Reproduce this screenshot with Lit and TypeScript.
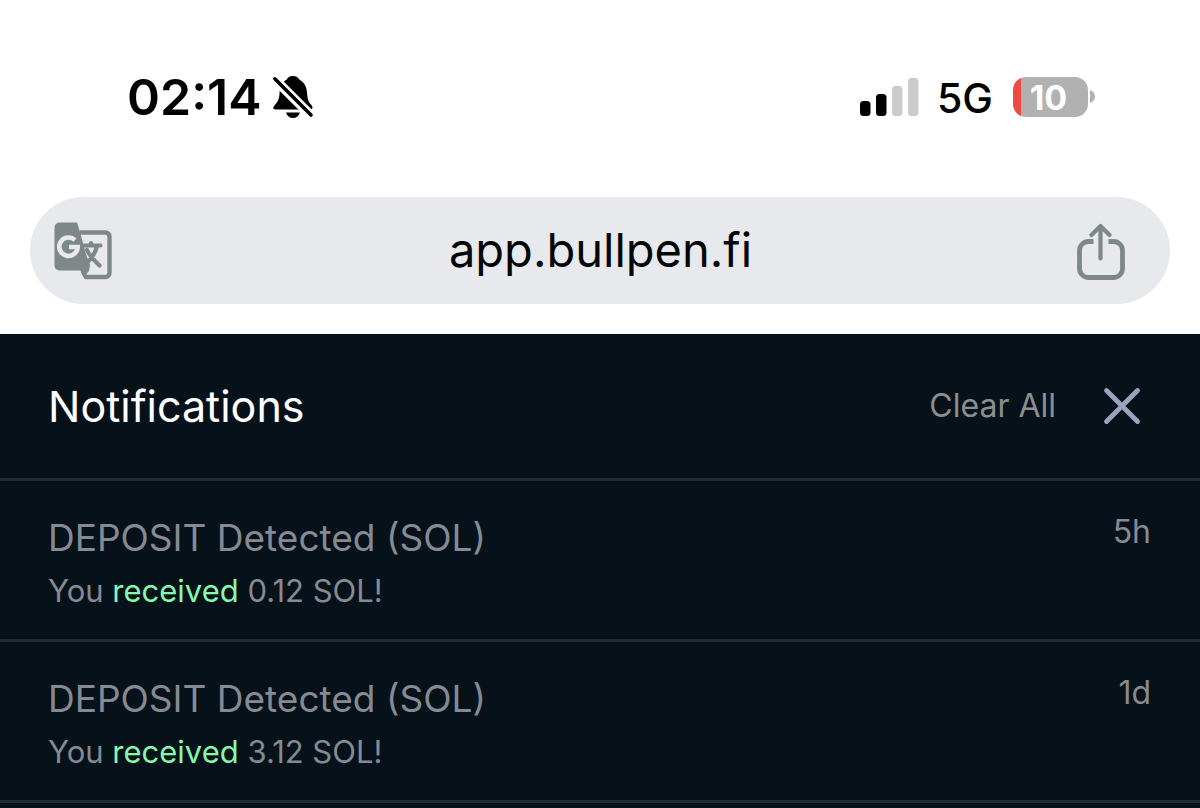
import { LitElement, html, css, svg } from "lit";
import { customElement, property, state } from "lit/decorators.js";

interface Notice {
  id: number;
  title: string;
  amount: string;
  age: string;
}

@customElement("status-bar")
class StatusBar extends LitElement {
  @property() time = "";
  @property() network = "";
  @property({ type: Number }) battery = 0;

  static styles = css`
    :host {
      display: flex;
      align-items: center;
      justify-content: space-between;
      height: 194px;
      padding: 0 104px 7px 127px;
      box-sizing: border-box;
      color: #000;
      font-family: Inter, sans-serif;
      line-height: 60px;
    }
    .group {
      display: flex;
      align-items: center;
    }
    .time {
      font-size: 50px;
      font-weight: 600;
    }
    .bell {
      margin-left: 10px;
    }
    .network {
      margin: 2px 20px 0 18px;
      font-size: 41px;
      font-weight: 500;
    }
    .battery {
      display: flex;
      align-items: center;
      gap: 2px;
    }
    .cell {
      width: 75px;
      height: 40px;
      padding-right: 4px;
      box-sizing: border-box;
      border-radius: 13px;
      background: linear-gradient(to right, #f04a45 8px, #b1b1b1 8px);
      color: #fff;
      font-size: 34px;
      font-weight: 700;
      line-height: 41px;
      text-align: center;
    }
    svg {
      display: block;
    }
  `;

  render() {
    const bars = [15, 22, 30, 38];
    return html`
      <div class="group">
        <span class="time">${this.time}</span>
        <svg class="bell" width="42" height="44" viewBox="0 0 42 44" role="img" aria-label="Silent">
          <path
            d="M21 1C17.800 1 15.600 2.500 14.500 4.800C9.500 7.500 7.800 12 7.500 19C7.200 24.500 5.500 27 3 29.800C.4 32.600 1 34.500 3.500 34.500H37.500C40.500 34.500 41.600 32.600 39.200 29.800C36.500 27 35.500 24.500 35.200 19C34.800 12 32.500 7.500 27.500 4.800C26.400 2.500 24.200 1 21 1Z"
          />
          <path d="M14 37.500H28C27 41 24.500 43 21 43S15 41 14 37.500Z" />
          <path d="M1 2.500L39 40.500" stroke="#fff" stroke-width="9.400" />
          <path d="M2.800 3.800L39 40" stroke="#000" stroke-width="3.600" stroke-linecap="round" />
        </svg>
      </div>
      <div class="group">
        <svg width="59" height="38" viewBox="0 0 59 38" role="img" aria-label="Signal">
          ${bars.map(
            (h, i) => svg`<rect x=${i * 16} y=${38 - h} width="10.500" height=${h} rx="3.500"
              fill=${i < 2 ? "#000" : "#cbcbcb"} />`
          )}
        </svg>
        <span class="network">${this.network}</span>
        <div class="battery">
          <div class="cell">${this.battery}</div>
          <svg width="6" height="13" viewBox="0 0 6 13" aria-hidden="true">
            <path d="M0 0Q5 2 5 6.500Q5 11 0 13Z" fill="#b1b1b1" />
          </svg>
        </div>
      </div>
    `;
  }
}

@customElement("address-bar")
class AddressBar extends LitElement {
  @property() address = "";

  static styles = css`
    :host {
      display: flex;
      align-items: center;
      height: 107px;
      margin: 0 30px;
      padding: 0 45px 0 24px;
      box-sizing: border-box;
      border-radius: 54px;
      background: #e8e9ed;
    }
    button {
      flex: none;
      padding: 0;
      border: 0;
      background: none;
      cursor: pointer;
    }
    svg {
      display: block;
    }
    .address {
      flex: 1;
      min-width: 0;
      height: 72px;
      padding: 0 0 3px 12px;
      box-sizing: border-box;
      border: 0;
      background: none;
      color: #050608;
      font: 400 47px/60px Inter, sans-serif;
      text-align: center;
      outline: none;
    }
  `;

  render() {
    return html`
      <button aria-label="Translate">
        <svg width="58" height="58" viewBox="0 0 58 58">
          <path
            d="M26 10.500H51.500A4 4 0 0 1 55.500 14.500V51A4 4 0 0 1 51.500 55H31.500"
            fill="none"
            stroke="#7f8889"
            stroke-width="4.400"
          />
          <path
            d="M5.500 .5H23L26 10L32 32L36 43L35 49L32.500 52V57H30.500L28 53L26.500 48.500H5.500A5 5 0 0 1 .5 43.500V5.500A5 5 0 0 1 5.500 .5Z"
            fill="#7f8889"
          />
          <path d="M32 25.500H39.500L36.500 31.500Z" fill="#e8e9ed" />
          <path
            d="M21 18.200A9.200 9.200 0 1 0 23.700 25H15"
            fill="none"
            stroke="#e8e9ed"
            stroke-width="4.600"
          />
          <g fill="none" stroke="#7f8889" stroke-width="4.200" stroke-linecap="round" stroke-linejoin="round">
            <path d="M30 23.500H46.500M37 21V23M43 24C41.500 31 38 36 33 41M33 28C36 35 41 39 45.500 43.500" />
          </g>
        </svg>
      </button>
      <input class="address" type="text" aria-label="Address" .value=${this.address} />
      <button aria-label="Share">
        <svg
          width="48"
          height="58"
          viewBox="0 0 48 58"
          fill="none"
          stroke="#7f8889"
          stroke-linecap="round"
          stroke-linejoin="round"
        >
          <path
            d="M16.500 19.500H11.500A9 9 0 0 0 2.500 28.500V46.500A9 9 0 0 0 11.500 55.500H36.500A9 9 0 0 0 45.500 46.500V28.500A9 9 0 0 0 36.500 19.500H31.500"
            stroke-width="4.800"
            stroke-linecap="butt"
          />
          <path d="M23.500 36.500V4.500M14.500 13L23.500 4L32.500 13" stroke-width="4.200" />
        </svg>
      </button>
    `;
  }
}

@customElement("notification-item")
class NotificationItem extends LitElement {
  @property({ attribute: false }) notice!: Notice;

  static styles = css`
    :host {
      display: flex;
      justify-content: space-between;
      padding: 31px 49px 21px 48px;
      border-bottom: 3px solid #1d2e3b;
      color: #858a93;
      font-family: Inter, sans-serif;
      font-size: 31px;
    }
    .title {
      margin: 0;
      font-size: 37px;
      font-weight: 400;
      line-height: 52px;
    }
    .detail {
      margin: 0;
      line-height: 54px;
    }
    .received {
      color: #86f8ac;
    }
    .age {
      font-size: 32px;
      line-height: 40px;
    }
  `;

  render() {
    const { title, amount, age } = this.notice;
    return html`
      <div>
        <h2 class="title">${title}</h2>
        <p class="detail">You <span class="received">received</span> ${amount}!</p>
      </div>
      <time class="age">${age}</time>
    `;
  }
}

@customElement("app-root")
class AppRoot extends LitElement {
  @state() private notices: Notice[] = [
    { id: 1, title: "DEPOSIT Detected (SOL)", amount: "0.12 SOL", age: "5h" },
    { id: 2, title: "DEPOSIT Detected (SOL)", amount: "3.12 SOL", age: "1d" },
  ];

  static styles = css`
    :host {
      display: flex;
      flex-direction: column;
      height: 100vh;
      overflow: hidden;
      background: #fff;
    }
    .chrome {
      flex: none;
      padding: 3px 0 30px;
    }
    .panel {
      flex: 1;
      background: #07111a;
      font-family: Inter, sans-serif;
    }
    .header {
      display: flex;
      align-items: center;
      height: 144px;
      padding: 0 59px 0 48px;
      border-bottom: 3px solid #1d2e3b;
    }
    .heading {
      flex: 1;
      margin: 0;
      color: #fff;
      font-size: 43px;
      font-weight: 400;
      line-height: 56px;
    }
    button {
      padding: 0;
      border: 0;
      background: none;
      cursor: pointer;
    }
    .clear {
      margin-right: 47px;
      color: #8c8f8f;
      font: 400 32px/42px Inter, sans-serif;
    }
    svg {
      display: block;
    }
  `;

  private clearAll() {
    this.notices = [];
  }

  render() {
    return html`
      <header class="chrome">
        <status-bar time="02:14" network="5G" battery="10"></status-bar>
        <address-bar address="app.bullpen.fi"></address-bar>
      </header>
      <main class="panel">
        <div class="header">
          <h1 class="heading">Notifications</h1>
          <button class="clear" @click=${this.clearAll}>Clear All</button>
          <button aria-label="Close">
            <svg width="38" height="38" viewBox="0 0 38 38">
              <path d="M3.500 3.500L34.500 34.500M34.500 3.500L3.500 34.500" stroke="#9da3bc" stroke-width="4.800" stroke-linecap="round" />
            </svg>
          </button>
        </div>
        ${this.notices.map((n) => html`<notification-item .notice=${n}></notification-item>`)}
      </main>
    `;
  }
}
